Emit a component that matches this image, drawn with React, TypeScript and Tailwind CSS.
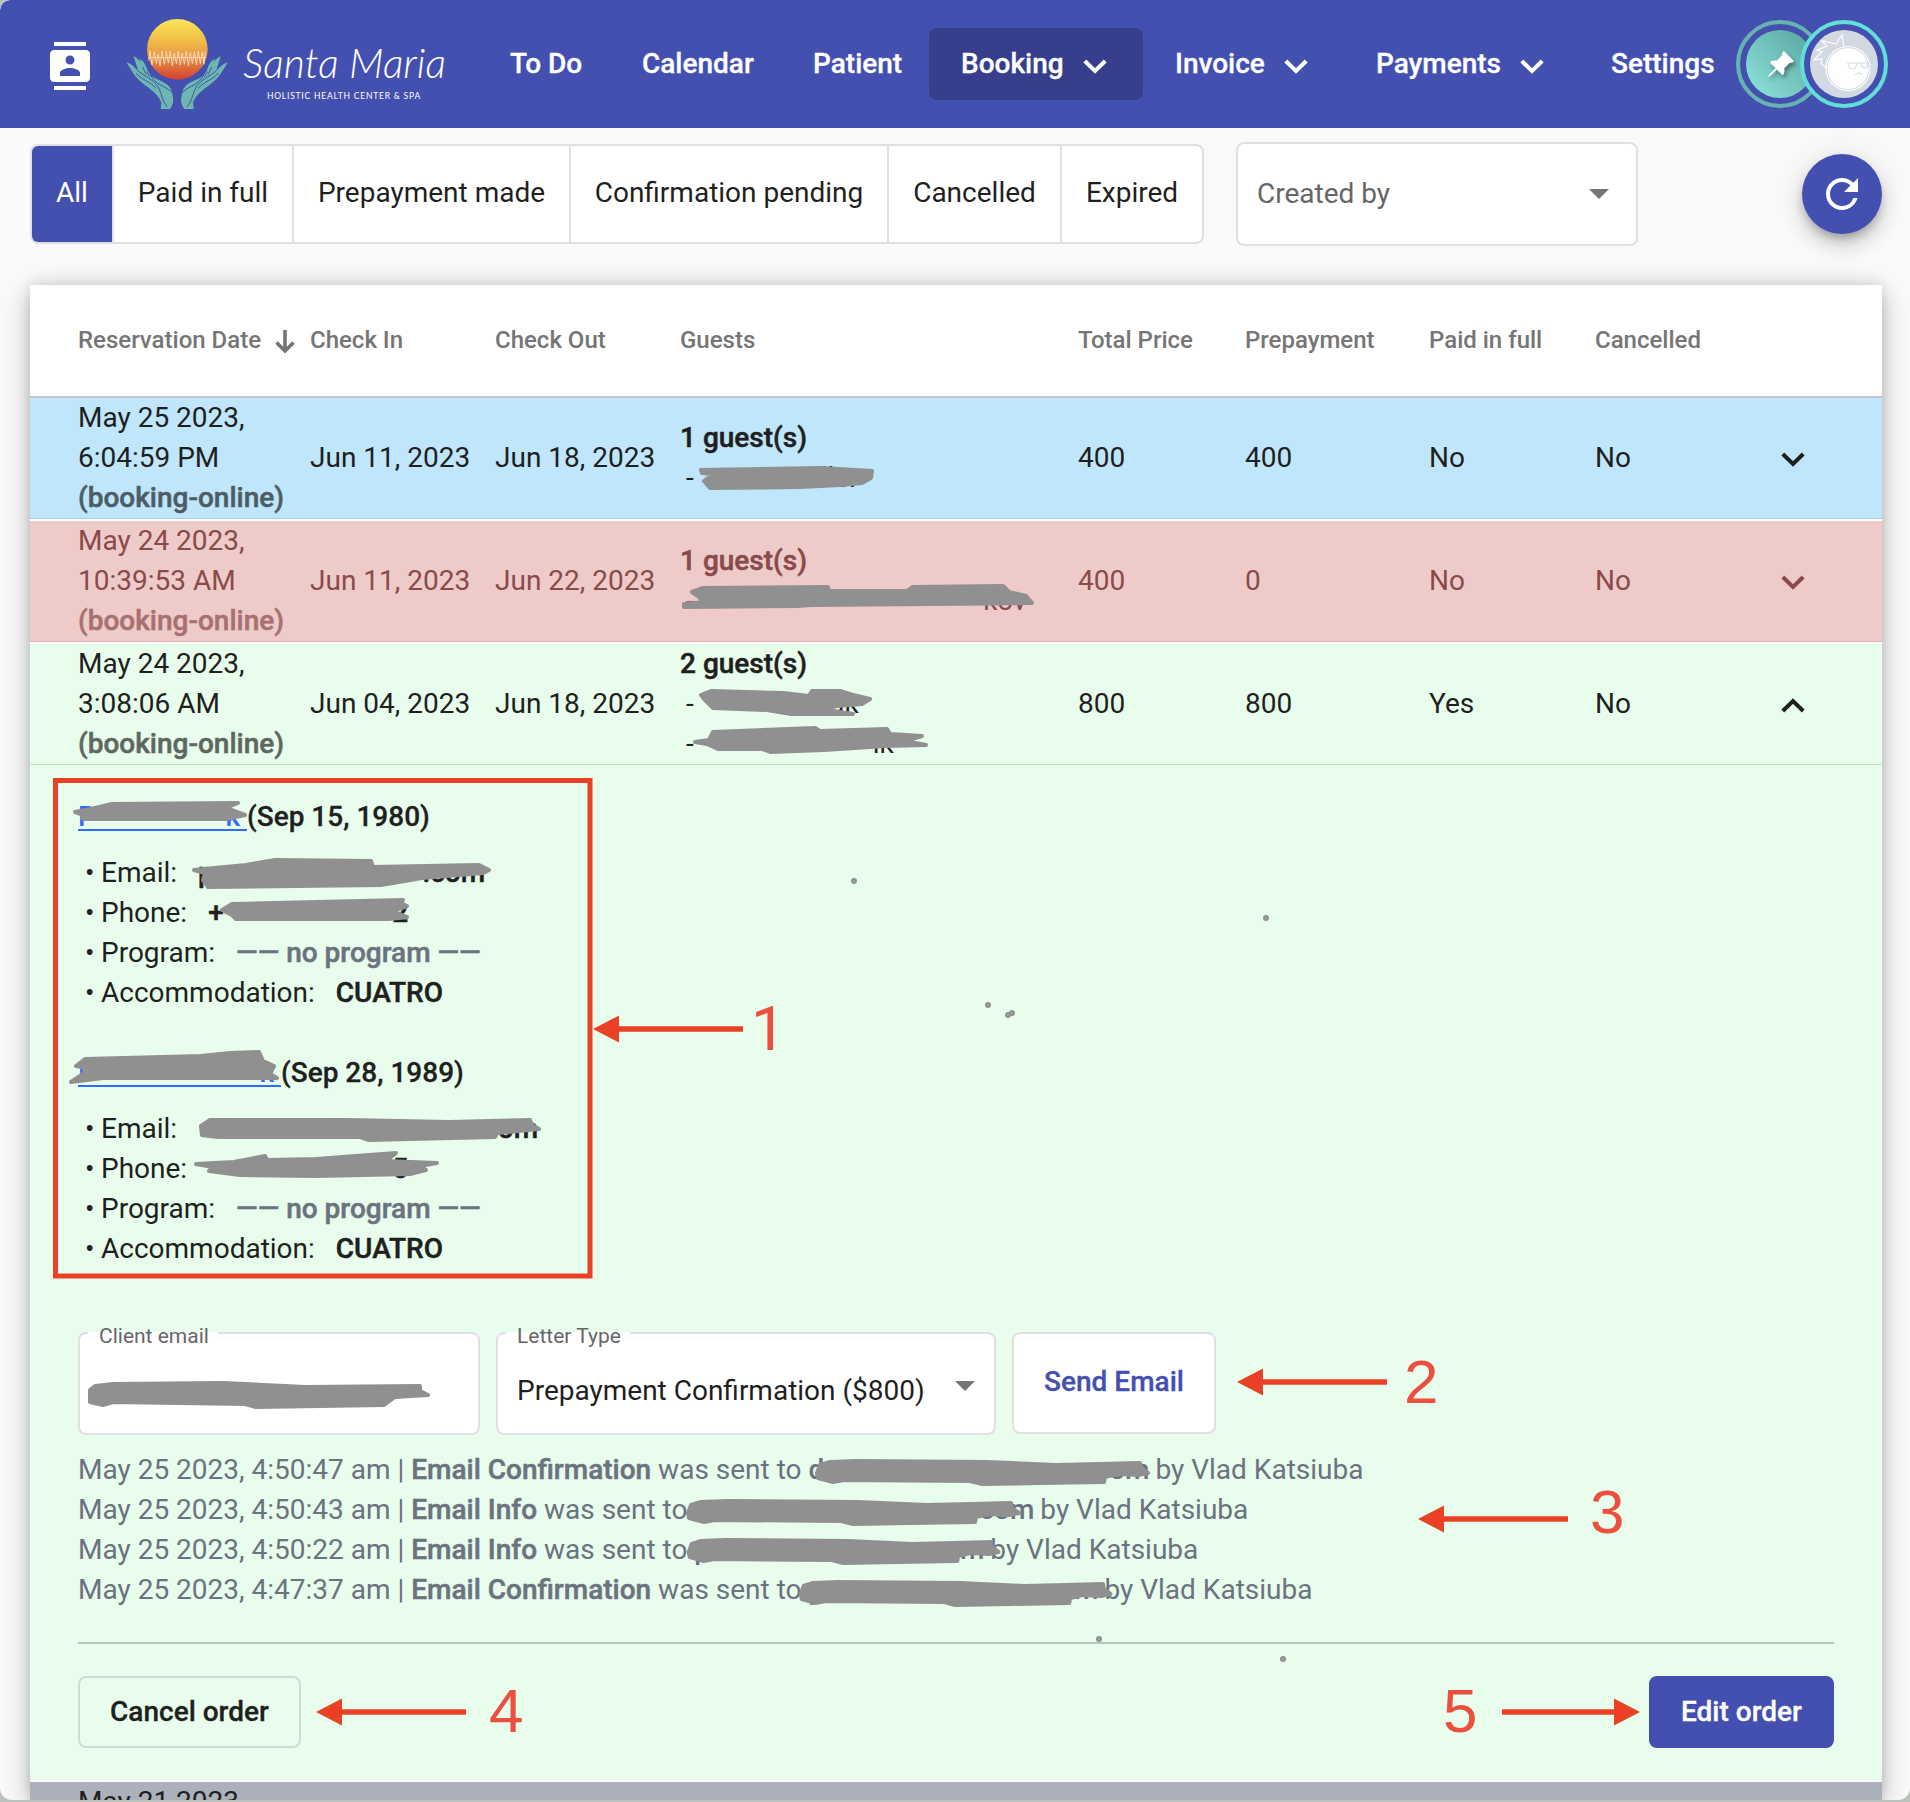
import React from "react";
import { MdContacts, MdRefresh } from "react-icons/md";
import { BsPinAngleFill } from "react-icons/bs";

const NAV = [
  { label: "To Do", cls: "w-[132px]" },
  { label: "Calendar", cls: "w-[171px]" },
  { label: "Patient", cls: "w-[116px]" },
  { label: "Booking", cls: "w-[214px] pl-8 mr-8 bg-[#373f8c] rounded-lg", arrow: true },
  { label: "Invoice", cls: "w-[201px]", arrow: true },
  { label: "Payments", cls: "w-[235px]", arrow: true },
  { label: "Settings", cls: "w-[104px]" },
];

function Chevron({ up = false }: { up?: boolean }) {
  return (
    <svg width="24" height="15" viewBox="0 0 24 15" className="shrink-0" fill="none" stroke="currentColor" strokeWidth="4">
      <path d={up ? "M1.8 13 L12 3 L22.2 13" : "M1.8 2 L12 12 L22.2 2"} />
    </svg>
  );
}

function Hand() {
  return (
    <g>
      <path
        fill="#6cb8b0"
        d="M152 296 L154 276 C142 246 108 228 90 212 C72 196 62 176 49 156 C60 158 72 168 84 182 C81 166 74 152 71 138 C82 142 92 154 97 168 C94 160 89 152 88 146 C100 150 108 164 113 182 L122 194 C134 206 156 212 168 220 C180 228 186 240 185 246 C192 262 192 282 180 296 Z"
      />
      <path
        fill="none"
        stroke="#4450af"
        strokeWidth="3"
        d="M84 182 C100 196 128 206 142 226 C154 244 156 272 172 290 M78 188 C90 206 122 214 138 234 M98 170 L108 192 M122 194 C136 224 164 226 184 244 M110 184 L120 200"
      />
    </g>
  );
}

function Logo() {
  return (
    <div className="flex h-[93px] w-[330px]">
      <svg width="103" height="93" viewBox="48 20 309 279" className="shrink-0">
        <defs>
          <linearGradient id="sun" x1="0" y1="0" x2="0" y2="1">
            <stop offset="0" stopColor="#f9e758" />
            <stop offset="0.3" stopColor="#f3c447" />
            <stop offset="0.6" stopColor="#e79a45" />
            <stop offset="1" stopColor="#d23f33" />
          </linearGradient>
        </defs>
        <circle cx="202" cy="117" r="91" fill="url(#sun)" />
        <path
          fill="none"
          stroke="#fbe3c4"
          strokeWidth="2.500"
          d="M115 142 H289 M116 150 L120 122 L126 164 L133 124 L139 160 L145 130 L150 166 L156 122 L163 162 L169 124 L175 158 L181 122 L187 166 L193 128 L199 160 L205 122 L211 164 L217 128 L223 162 L229 122 L235 166 L241 126 L247 160 L253 124 L259 164 L265 122 L271 160 L277 124 L282 162 L286 124"
        />
        <Hand />
        <g transform="translate(403 0) scale(-1 1)">
          <Hand />
        </g>
      </svg>
      <div className="ml-3 flex flex-col pt-6 text-white">
        <div className="h-[48px] whitespace-nowrap pl-0.5 font-['Lato'] text-[41px] font-light italic leading-[44px]">Santa Maria</div>
        <div className="whitespace-nowrap pl-[26px] font-['Lato'] text-[8.5px] leading-[15px] tracking-[0.78px]">
          HOLISTIC HEALTH CENTER &amp; SPA
        </div>
      </div>
    </div>
  );
}

function Header() {
  return (
    <header className="flex h-32 shrink-0 items-start rounded-tl-[10px] bg-[#4450af] text-white">
      <MdContacts size={48} className="ml-[46px] mt-[42px] shrink-0" />
      <div className="ml-8 mt-[17px] w-[384px] shrink-0">
        <Logo />
      </div>
      <nav className="mt-7 flex h-[72px] shrink-0 text-[28px] font-medium [-webkit-text-stroke:0.3px]">
        {NAV.map((n) => (
          <div key={n.label} className={"flex h-full shrink-0 items-center whitespace-nowrap " + n.cls}>
            {n.label}
            {n.arrow && (
              <span className="ml-[19px] mt-1">
                <Chevron />
              </span>
            )}
          </div>
        ))}
      </nav>
      <div className="ml-[21px] mt-5 flex">
        <div className="flex h-[88px] w-[88px] shrink-0 items-center justify-center rounded-full border-4 border-[#66b3af]">
          <div className="flex h-[68px] w-[68px] items-center justify-center rounded-full bg-linear-to-tr from-[#8fe6dc] to-[#58a39f]">
            <BsPinAngleFill size={29} className="drop-shadow-[2px_3px_2px_rgba(0,0,0,0.4)]" />
          </div>
        </div>
        <div className="-ml-6 flex h-[88px] w-[88px] shrink-0 items-center justify-center rounded-full border-4 border-[#62dfd8] bg-[#4450af]">
          <svg width="68" height="68" viewBox="0 0 68 68">
            <circle cx="34" cy="34" r="34" fill="#d3d9e2" />
            <g fill="none" stroke="#fff" strokeWidth="1.1">
              <path d="M17 38 L11 34 L12 29 L4 30 L12 22 L7 20 L17 16 L12 11 L26 14 L32 5 L34 17" />
              <circle cx="38" cy="38.500" r="22" />
            </g>
            <circle cx="38" cy="38.500" r="20.500" fill="#fff" />
            <g fill="none" stroke="#d3d9e2" strokeWidth="1.1">
              <path d="M37 33 H59 M38 33 C39 41 46 41 47 33 M51 33 C52 40 57 40 58 33 M45 45 C48 42 51 42 52 45" />
            </g>
          </svg>
        </div>
      </div>
    </header>
  );
}

const TABS = [
  { label: "All", cls: "w-[82px] bg-[#4450af] text-white rounded-l-md border-r-2" },
  { label: "Paid in full", cls: "w-[180px] border-r-2" },
  { label: "Prepayment made", cls: "w-[277px] border-r-2" },
  { label: "Confirmation pending", cls: "w-[318px] border-r-2" },
  { label: "Cancelled", cls: "w-[173px] border-r-2" },
  { label: "Expired", cls: "w-[140px]" },
];

function Toolbar() {
  return (
    <div className="flex h-[157px] shrink-0 items-start pl-[30px] pr-7 text-[28px]">
      <div className="mt-4 flex h-[100px] rounded-lg border-2 border-[#e0e0e0] bg-white">
        {TABS.map((t) => (
          <div key={t.label} className={"flex items-center justify-center whitespace-nowrap border-[#e0e0e0] pb-0.5 " + t.cls}>
            {t.label}
          </div>
        ))}
      </div>
      <div className="ml-8 mt-3.5 flex h-[104px] w-[402px] items-center justify-between rounded-lg border-2 border-[#e0e0e0] bg-white pl-[19px] pr-[27px] text-[#666]">
        <span>Created by</span>
        <Caret />
      </div>
      <div className="ml-auto mt-[26px] flex h-20 w-20 items-center justify-center rounded-full bg-[#4450af] text-white shadow-[0_6px_10px_-2px_rgba(0,0,0,0.25),0_12px_20px_rgba(0,0,0,0.14),0_2px_36px_rgba(0,0,0,0.1)]">
        <MdRefresh size={48} />
      </div>
    </div>
  );
}

function Caret() {
  return (
    <svg width="20" height="10" viewBox="0 0 20 10" className="shrink-0">
      <path d="M0 0 H20 L10 10 Z" fill="#757575" />
    </svg>
  );
}

/* A redacted value: keeps its width and only the edges that stay readable. */
function Redacted({ w, start = "", end = "" }: { w: number; start?: string; end?: string }) {
  return (
    <span className="inline-flex justify-between whitespace-nowrap align-bottom" style={{ width: w }}>
      <span>{start}</span>
      <span>{end}</span>
    </span>
  );
}

type Booking = {
  date: string;
  time: string;
  checkIn: string;
  checkOut: string;
  guests: { w: number; end: string }[];
  total: string;
  prepaid: string;
  paid: string;
  open?: boolean;
  cls: string;
  sub: string;
};

const BOOKINGS: Booking[] = [
  { date: "May 25 2023,", time: "6:04:59 PM", checkIn: "Jun 11, 2023", checkOut: "Jun 18, 2023", guests: [{ w: 158, end: "ller" }], total: "400", prepaid: "400", paid: "No", cls: "bg-[#bfe6fb] border-[#a5cfe9] mb-0.5", sub: "text-[#4d5d66]" },
  { date: "May 24 2023,", time: "10:39:53 AM", checkIn: "Jun 11, 2023", checkOut: "Jun 22, 2023", guests: [{ w: 326, end: "kov" }], total: "400", prepaid: "0", paid: "No", cls: "bg-[#eecac9] border-[#dfb1b1] text-[#8a4a4a] mb-0.5", sub: "text-[#a97070]" },
  { date: "May 24 2023,", time: "3:08:06 AM", checkIn: "Jun 04, 2023", checkOut: "Jun 18, 2023", guests: [{ w: 158, end: "ak" }, { w: 193, end: "ik" }], total: "800", prepaid: "800", paid: "Yes", open: true, cls: "bg-[#e8fdec] border-[#b9e6c1]", sub: "text-[#5e6860]" },
];

function Row({ b }: { b: Booking }) {
  return (
    <div className={"grid h-[121px] shrink-0 grid-cols-[232px_185px_185px_398px_167px_184px_166px_1fr] items-center whitespace-nowrap border-b pl-12 text-[28px] leading-10 " + b.cls}>
      <div>
        {b.date}
        <br />
        {b.time}
        <br />
        <span className={"font-medium [-webkit-text-stroke:0.5px] " + b.sub}>(booking-online)</span>
      </div>
      <div>{b.checkIn}</div>
      <div>{b.checkOut}</div>
      <div>
        <div className="font-medium [-webkit-text-stroke:0.5px]">{b.guests.length} guest(s)</div>
        {b.guests.map((g, i) => (
          <div key={i} className="pl-1.5">
            - <Redacted w={g.w} end={g.end} />
          </div>
        ))}
      </div>
      <div>{b.total}</div>
      <div>{b.prepaid}</div>
      <div>{b.paid}</div>
      <div className="flex items-center">
        <span className="w-[186px]">No</span>
        <span className="mt-0.5">
          <Chevron up={b.open} />
        </span>
      </div>
    </div>
  );
}

function Guest({ w, start, born, email, phone, cls }: { w: number; start: string; born: string; email: React.ReactNode; phone: React.ReactNode; cls: string }) {
  const items: [string, React.ReactNode][] = [
    ["Email:", email],
    ["Phone:", phone],
    ["Program:", <span className="text-[#6b7280]">—— no program ——</span>],
    ["Accommodation:", "CUATRO"],
  ];
  return (
    <div className={cls}>
      <div className="flex font-medium">
        <span className="h-[34px] border-b-2 border-[#2f6bff] text-[#2f6bff]">
          <span className="flex justify-between pr-[7px]" style={{ width: w }}>
            <span>{start}</span>
            <span>k</span>
          </span>
        </span>
        <span className="[-webkit-text-stroke:0.3px]">{born}</span>
      </div>
      <ul className="mt-4">
        {items.map(([k, v]) => (
          <li key={k} className="flex whitespace-nowrap">
            <span className="w-[23px] pl-[7px]">•</span>
            <span>{k}</span>
            <span className="ml-[21px] font-medium [-webkit-text-stroke:0.5px]">{v}</span>
          </li>
        ))}
      </ul>
    </div>
  );
}

const LOGS = [
  { time: "4:50:47 am", type: "Email Confirmation", w: 341, start: "d", end: ".com" },
  { time: "4:50:43 am", type: "Email Info", w: 340, start: "", end: ".com" },
  { time: "4:50:22 am", type: "Email Info", w: 290, start: "p", end: ".com" },
  { time: "4:47:37 am", type: "Email Confirmation", w: 290, start: "p", end: ".com" },
];

function Field({ label, cls, notch, children }: { label: string; cls: string; notch: string; children?: React.ReactNode }) {
  return (
    <div className={"relative flex h-[103px] items-center rounded-lg border-2 border-[#e0e0e0] bg-white pl-[19px] text-[28px] " + cls}>
      <span className={"absolute -top-0.5 left-2 h-0.5 bg-white " + notch} />
      <span className="absolute -top-3 left-[19px] whitespace-nowrap text-[21px] leading-[28px] text-[#666]">{label}</span>
      {children}
    </div>
  );
}

function Details() {
  return (
    <div className="flex h-[1015px] shrink-0 flex-col bg-[#e8fdec] pl-12 pr-12 text-[28px] leading-10">
      <Guest
        cls="mt-8"
        w={169}
        start="P"
        born="(Sep 15, 1980)"
        email={<Redacted w={287} start="p" end=".com" />}
        phone={<Redacted w={200} start="+" end="2" />}
      />
      <Guest
        cls="mt-10"
        w={203}
        start="D"
        born="(Sep 28, 1989)"
        email={<Redacted w={340} end=".com" />}
        phone={<Redacted w={200} end="5" />}
      />
      <div className="mt-[63px] flex shrink-0">
        <Field label="Client email" cls="w-[402px]" notch="w-[130px]" />
        <Field label="Letter Type" cls="ml-4 w-[500px]" notch="w-[124px]">
          <span className="mt-[15px] w-[438px] whitespace-nowrap">Prepayment Confirmation ($800)</span>
          <span className="mb-1 mt-2 flex">
            <Caret />
          </span>
        </Field>
        <div className="ml-4 flex h-[102px] w-[204px] items-center justify-center rounded-lg border-2 border-[#e0e0e0] bg-white pb-0.5 font-medium text-[#4450af] [-webkit-text-stroke:0.3px]">
          Send Email
        </div>
      </div>
      <div className="mt-[15px] shrink-0 text-[#6b7280]">
        {LOGS.map((l) => (
          <div key={l.time} className="flex h-10 whitespace-pre">
            May 25 2023, {l.time} | <span className="font-medium [-webkit-text-stroke:0.5px]">{l.type}</span> was sent to{" "}
            <span className="mr-1.5 font-medium">
              <Redacted w={l.w} start={l.start} end={l.end} />
            </span>
            by Vlad Katsiuba
          </div>
        ))}
      </div>
      <div className="mt-8 h-0.5 shrink-0 bg-[#b6c5b8]" />
      <div className="mt-8 flex shrink-0 justify-between font-medium [-webkit-text-stroke:0.3px]">
        <div className="flex h-[72px] w-[223px] items-center justify-center rounded-lg border-2 border-[#cbdecf] text-[#1f1f1f]">Cancel order</div>
        <div className="flex h-[72px] w-[185px] items-center justify-center rounded-lg bg-[#4450af] text-white">Edit order</div>
      </div>
    </div>
  );
}

function Arrow({ tip, tail, y }: { tip: number; tail: number; y: number }) {
  const d = tail > tip ? 26 : -26;
  return (
    <g fill="#ea4025">
      <path d={`M${tip} ${y} L${tip + d} ${y - 13.5} V${y + 13.5} Z`} />
      <path d={`M${tip + d - Math.sign(d)} ${y} H${tail}`} stroke="#ea4025" strokeWidth="5.500" />
    </g>
  );
}

const LONG =
  "M817 1473 L820 1465 L830 1462 L856 1461 L987 1462 L1056 1465 L1100 1464 L1140 1463 L1141 1468 L1148 1473 L1138 1475 L1118 1474 L1105 1477 L1104 1482 L1040 1483 L982 1484 L970 1481 L844 1480 L833 1482 L818 1478 Z";

const SCRIBBLES = [
  "M701 470 L820 468 L872 471 L871 478 L862 483 L840 485 L800 487 L710 488 L704 481 L713 474 L702 473 Z",
  "M692 592 L703 588 L828 587 L829 591 L907 591 L913 587 L1003 586 L1009 592 L1026 596 L1032 603 L811 605 L797 606 L684 607 L684 604 L703 602 L699 597 Z",
  "M701 695 L711 691 L783 693 L809 696 L812 691 L840 691 L853 695 L870 699 L862 704 L838 706 L820 709 L853 714 L791 714 L767 710 L713 708 L705 700 Z",
  "M695 742 L709 740 L713 732 L815 728 L820 731 L887 729 L890 734 L922 736 L905 741 L926 745 L885 746 L824 750 L771 752 L762 749 L718 749 L707 744 Z",
  "M75 812 L91 809 L112 804 L238 803 L226 808 L245 815 L226 819 L83 819 L81 814 Z",
  "M194 870 L246 865 L275 860 L371 861 L373 867 L479 865 L489 870 L483 873 L422 878 L381 885 L208 887 L203 880 L205 873 Z",
  "M222 910 L232 904 L403 900 L399 903 L407 906 L393 911 L407 917 L389 919 L236 919 L232 915 Z",
  "M71 1082 L83 1074 L86 1068 L76 1066 L85 1059 L201 1056 L230 1053 L259 1052 L263 1061 L274 1066 L270 1074 L277 1078 L226 1078 L103 1078 Z",
  "M201 1126 L210 1120 L348 1120 L450 1122 L530 1120 L532 1125 L539 1129 L497 1133 L495 1137 L369 1140 L360 1137 L218 1137 L202 1135 Z",
  "M196 1164 L234 1162 L265 1156 L267 1160 L316 1159 L396 1153 L386 1161 L437 1163 L420 1166 L426 1170 L410 1174 L316 1176 L240 1175 L209 1171 L213 1167 Z",
  "M90 1390 L95 1386 L113 1384 L223 1383 L305 1387 L420 1386 L420 1391 L428 1395 L395 1397 L384 1405 L256 1407 L245 1404 L113 1402 L103 1405 L90 1402 Z",
  LONG,
];

const SPECKS: [number, number][] = [
  [854, 881],
  [1266, 918],
  [988, 1005],
  [1008, 1015],
  [1012, 1013],
  [1099, 1639],
  [1283, 1659],
];

const NUMBERS = [
  { n: "2", x: 1404, y: 1403 },
  { n: "3", x: 1590, y: 1533 },
  { n: "4", x: 489, y: 1732 },
  { n: "5", x: 1443, y: 1732 },
];

/* Hand-made markup drawn on top of the page: redactions, callout box, arrows and numbers. */
function Annotations() {
  return (
    <svg width="1910" height="1802" viewBox="0 0 1910 1802" className="pointer-events-none absolute left-0 top-0">
      <g fill="#909090" stroke="#909090" strokeWidth="4" strokeLinejoin="round">
        {SCRIBBLES.map((d) => (
          <path key={d} d={d} />
        ))}
        <path d={LONG} transform="translate(-129 40)" />
        <path d={LONG} transform="translate(-76 79) scale(.936 1)" />
        <path d={LONG} transform="translate(36 121) scale(.936 1)" />
        {SPECKS.map(([x, y]) => (
          <circle key={x} cx={x} cy={y} r="1" />
        ))}
      </g>
      <rect x="55.500" y="780.500" width="534.500" height="495.500" fill="none" stroke="#ea4025" strokeWidth="5" />
      <Arrow tip={593} tail={743} y={1029} />
      <Arrow tip={1237} tail={1387} y={1382} />
      <Arrow tip={1418} tail={1568} y={1519} />
      <Arrow tip={316} tail={466} y={1712} />
      <Arrow tip={1640} tail={1502} y={1712} />
      <g fill="#ec4f3e" fontFamily="Liberation Sans, sans-serif" fontSize="62">
        <text x="751" y="1050" fontFamily="Roboto, sans-serif">
          1
        </text>
        {NUMBERS.map((m) => (
          <text key={m.n} x={m.x} y={m.y}>
            {m.n}
          </text>
        ))}
      </g>
    </svg>
  );
}

export default function App() {
  return (
    <div className="relative h-[1802px] w-full overflow-hidden bg-[#b9c3bc] font-['Roboto',sans-serif] text-[#1f1f1f]">
      <div className="flex h-[1800px] flex-col overflow-hidden rounded-b-[12px] rounded-tl-[10px] bg-[#fafafa]">
        <Header />
        <Toolbar />
        <main className="mx-[30px] mr-7 flex shrink-0 flex-col bg-white shadow-[0_10px_14px_-6px_rgba(0,0,0,0.2),0_6px_30px_rgba(0,0,0,0.2),0_0_14px_rgba(0,0,0,0.12)]">
          <div className="grid h-[113px] shrink-0 grid-cols-[232px_185px_185px_398px_167px_184px_166px_1fr] items-center whitespace-nowrap border-b-2 border-[#bccbd3] pb-0.5 pl-12 text-[24px] font-medium text-[#757575]">
            <div className="flex items-center">
              Reservation Date
              <svg width="20" height="24" viewBox="0 0 20 24" className="ml-3.5 mt-1" fill="none" stroke="currentColor" strokeWidth="3.600">
                <path d="M10 0 V20 M1.500 12.500 L10 21 L18.500 12.500" />
              </svg>
            </div>
            <div>Check In</div>
            <div>Check Out</div>
            <div>Guests</div>
            <div>Total Price</div>
            <div>Prepayment</div>
            <div>Paid in full</div>
            <div>Cancelled</div>
          </div>
          {BOOKINGS.map((b) => (
            <Row key={b.time} b={b} />
          ))}
          <Details />
          <div className="mt-0.5 h-[18px] shrink-0 overflow-hidden bg-[#abb0bb] pl-12 text-[28px] leading-10">May 21 2023,</div>
        </main>
      </div>
      <Annotations />
    </div>
  );
}
